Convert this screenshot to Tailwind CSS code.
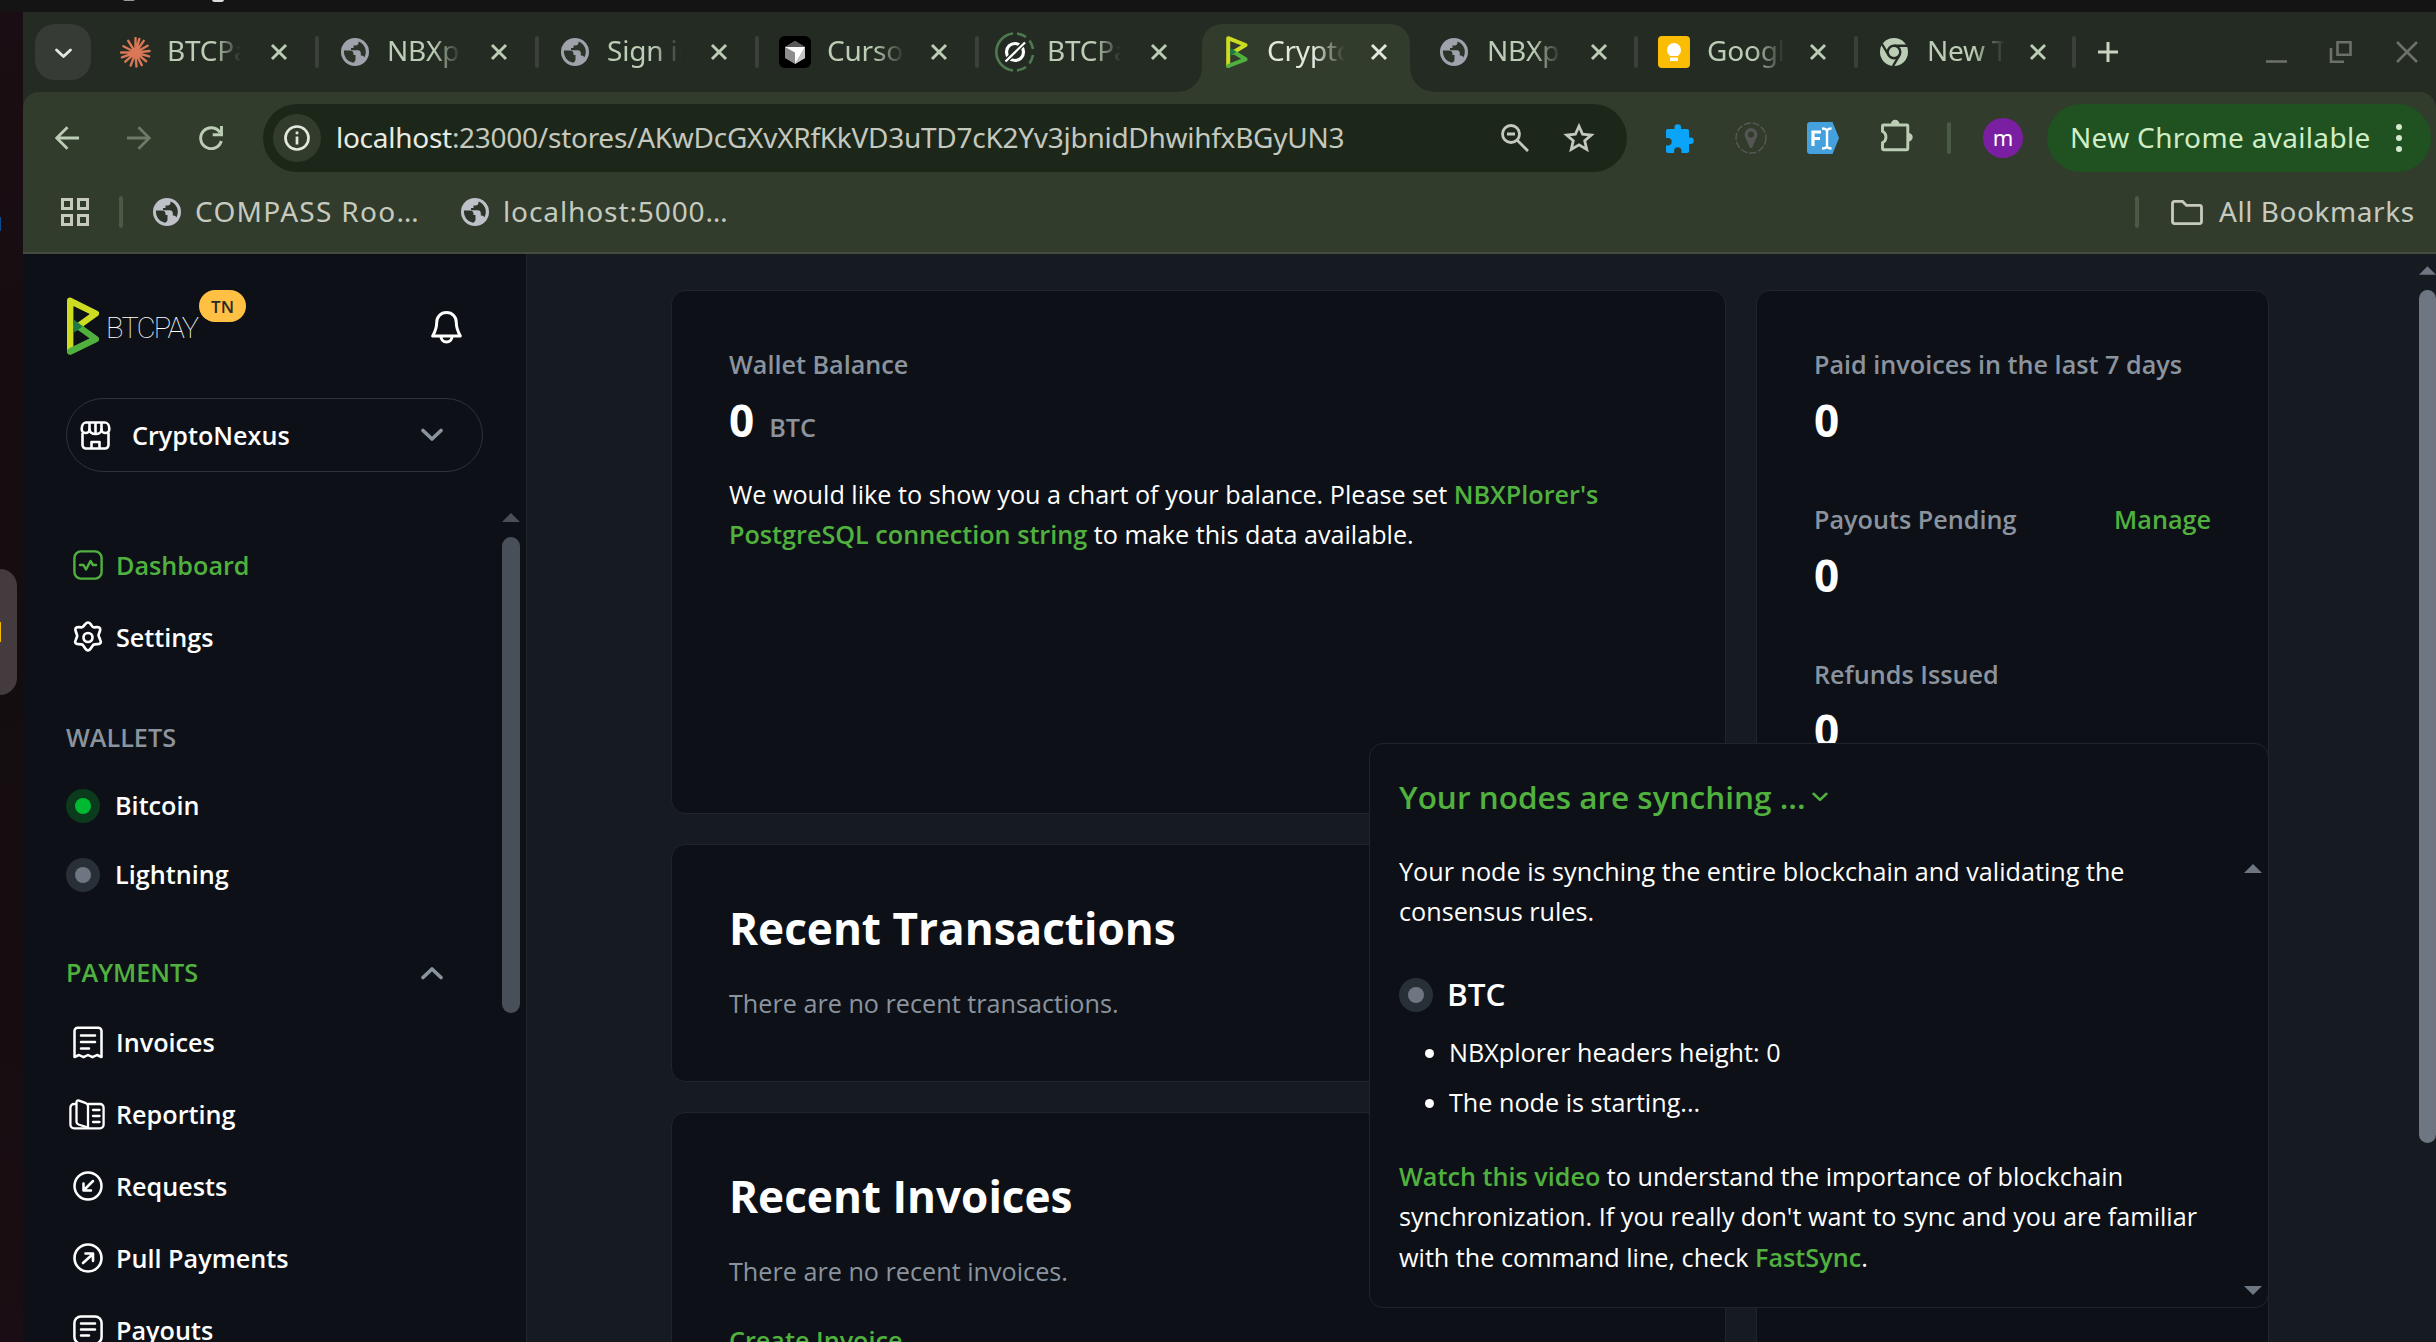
<!DOCTYPE html>
<html lang="en">
<head>
<meta charset="utf-8">
<title>CryptoNexus</title>
<script src="https://cdn.jsdelivr.net/npm/@tailwindcss/browser@4"></script>
</head>
<body class="relative w-[2436px] h-[1342px] overflow-hidden bg-[#141414] font-['Open_Sans',sans-serif] text-[25.2px] leading-[40.3px] text-white">
<svg class="hidden">
  <symbol id="globe" viewBox="0 0 28 28"><circle cx="14" cy="14" r="14" fill="currentColor"/><path d="M3 12.500h5.500c2.500 0 4 1 4 3v1.500h2v4.500c0 1.500-1 3-2.600 3.300A11.200 11.200 0 0 1 3 12.500zM17.500 3.400v1.400c0 1.600-1.200 2.800-2.800 2.800h-2.200v2.400h-2.500v2.200h7c1.600 0 2.800 1.200 2.800 2.800v2.600h1c1.200 0 2.100.9 2.500 1.900A11.200 11.200 0 0 0 17.500 3.400z" fill="#2b3429"/></symbol>
  <symbol id="x" viewBox="0 0 18 18"><path d="M2 2l14 14M16 2L2 16" stroke="currentColor" stroke-width="2.900" fill="none"/></symbol>
  <symbol id="btcpay" viewBox="0 0 32 58"><path d="M3.200 54V3.800L28.800 16.500 10 30" fill="none" stroke="#cedc21" stroke-width="6.400" stroke-linejoin="round" stroke-linecap="round"/><path d="M3.200 54.500L28.800 42 10 28.500" fill="none" stroke="#51b13e" stroke-width="6.400" stroke-linejoin="round" stroke-linecap="round"/><path d="M6.400 22v14l9-6.500z" fill="#1e7a44"/></symbol>
  <symbol id="chev" viewBox="0 0 22 14"><path d="M2 2.500l9 8.500 9-8.500" fill="none" stroke="currentColor" stroke-width="3.600" stroke-linecap="round" stroke-linejoin="round"/></symbol>
</svg>

<!-- Desktop panel edge -->
<div class="h-3 bg-[#141414] relative overflow-hidden">
  <div class="absolute left-[123px] -top-[3px] w-3 h-1 rounded-full bg-[#999]"></div>
  <div class="absolute left-[212px] -top-[3px] w-3 h-[5px] rounded-full bg-[#ddd]"></div>
</div>

<div class="flex h-[1330px]">
  <!-- Dock -->
  <div class="relative w-[23px] shrink-0 bg-linear-to-b from-[#1a0d13] via-[#140d0f] to-[#1a0d13] overflow-hidden">
    <div class="absolute left-0 top-[557px] w-[17px] h-[126px] rounded-r-[18px] bg-[#443b3f]"></div>
    <div class="absolute left-0 top-[610px] w-px h-5 bg-[#f5b800]"></div>
    <div class="absolute left-0 top-[205px] w-px h-3.5 bg-[#0c4a8c]"></div>
  </div>

  <!-- Browser -->
  <div class="flex flex-col w-[2413px] bg-[#242b23]">
    <!-- Tab strip -->
    <div class="h-20 flex items-start pt-3 pl-3 font-['Noto_Sans',sans-serif] text-[28px] tracking-[-0.2px] text-[#bccdb5] leading-none">
      <div class="w-14 h-14 rounded-[20px] bg-[#373b36] flex items-center justify-center text-[#e3e8df]"><svg class="w-[17px] h-[11px] mt-0.5"><use href="#chev"/></svg></div>

      <div class="ml-[29px] w-[197px] h-14 flex items-center">
        <svg class="w-[31px] h-[31px] shrink-0" viewBox="-16 -16 32 32"><g stroke="#d97757" stroke-width="2.500" stroke-linecap="round"><path d="M0 0V-15M0 0L4-14M0 0L8.500-12M0 0L12.500-7M0 0L14.500-1.500M0 0L14 4M0 0L11 9M0 0L6.500 13M0 0L1 14.500M0 0L-5 13.500M0 0L-10.500 9.500M0 0L-14 5M0 0L-15 0M0 0L-12.500-6.500M0 0L-7.500-12"/></g></svg>
        <div class="ml-4 mr-px w-[78px] h-10 leading-[37px] overflow-hidden whitespace-nowrap mask-r-from-60% mask-r-to-95%">BTCPay</div>
        <svg class="ml-[24px] w-[18px] h-[18px] shrink-0"><use href="#x"/></svg>
      </div>
      <div class="w-1 h-8 mt-3 -ml-0.5 rounded-full bg-[#3b413a] shrink-0"></div>
      <div class="w-[216px] h-14 flex items-center pl-[22px]">
        <svg class="w-7 h-7 shrink-0 text-[#9fa2ab]"><use href="#globe"/></svg>
        <div class="ml-[18px] w-[78px] h-10 leading-[37px] overflow-hidden whitespace-nowrap mask-r-from-60% mask-r-to-95%">NBXplorer</div>
        <svg class="ml-[25px] w-[18px] h-[18px] shrink-0"><use href="#x"/></svg>
      </div>
      <div class="w-1 h-8 mt-3 rounded-full bg-[#3b413a] shrink-0"></div>
      <div class="w-[216px] h-14 flex items-center pl-[22px]">
        <svg class="w-7 h-7 shrink-0 text-[#9fa2ab]"><use href="#globe"/></svg>
        <div class="ml-[18px] w-[78px] h-10 leading-[37px] overflow-hidden whitespace-nowrap mask-r-from-60% mask-r-to-95%">Sign in</div>
        <svg class="ml-[25px] w-[18px] h-[18px] shrink-0"><use href="#x"/></svg>
      </div>
      <div class="w-1 h-8 mt-3 rounded-full bg-[#3b413a] shrink-0"></div>
      <div class="w-[216px] h-14 flex items-center pl-5">
        <svg class="w-8 h-8 shrink-0" viewBox="0 0 32 32"><rect width="32" height="32" rx="6" fill="#000"/><path d="M16 5l10 6v11l-10 6-10-6V11z" fill="#8d8d8d"/><path d="M6 11l10-6 10 6z" fill="#5a5a5a"/><path d="M6 11h20L16 28V16.500z" fill="#fff"/><path d="M26 11v11l-10 6z" fill="#c4c4c4"/></svg>
        <div class="ml-4 w-[78px] h-10 leading-[37px] overflow-hidden whitespace-nowrap mask-r-from-60% mask-r-to-100%">Cursor</div>
        <svg class="ml-[25px] w-[18px] h-[18px] shrink-0"><use href="#x"/></svg>
      </div>
      <div class="w-1 h-8 mt-3 rounded-full bg-[#3b413a] shrink-0"></div>
      <div class="w-[225px] h-14 flex items-center pl-4">
        <svg class="w-10 h-10 shrink-0" viewBox="-20 -20 40 40" fill="none"><path d="M-2-18.500A18.600 18.600 0 0 0-2 18.500M2-18.500Q7-17.800 11-15M14.500-11.500Q17-8 18-3M18 3Q17 8 14.500 11.500M11 15Q7 17.800 2 18.500" stroke="#4f7a50" stroke-width="2.600"/><circle r="8.500" stroke="#fff" stroke-width="3.200"/><path d="M-10 10L10-10" stroke="#242b23" stroke-width="5"/><path d="M-9.500 9.500L10-9.500" stroke="#fff" stroke-width="2.300"/></svg>
        <div class="ml-3 w-[78px] h-10 leading-[37px] overflow-hidden whitespace-nowrap mask-r-from-60% mask-r-to-95%">BTCPay</div>
        <svg class="ml-[25px] w-[18px] h-[18px] shrink-0"><use href="#x"/></svg>
      </div>
      <!-- Active tab -->
      <div class="relative w-[208px] h-[68px] pb-3 flex items-center pl-6 bg-[#313c2d] rounded-t-[20px] text-[#e3e8df] -ml-0.5">
        <div class="absolute -left-6 bottom-0 size-6 bg-[radial-gradient(circle_at_0_0,transparent_23.5px,#313c2d_24px)]"></div>
        <div class="absolute -right-6 bottom-0 size-6 bg-[radial-gradient(circle_at_100%_0,transparent_23.5px,#313c2d_24px)]"></div>
        <svg class="w-[22px] h-8 shrink-0" viewBox="0 0 22 32" fill="none" stroke-width="4" stroke-linejoin="round" stroke-linecap="round"><path d="M2.200 30V2.200L19.500 9 7 16.500" stroke="#cedc21"/><path d="M2.200 30L19.500 23.300 7 15.500" stroke="#51b13e"/><path d="M4.200 12v8l6-4z" fill="#1e7a44"/></svg>
        <div class="ml-[19px] w-[78px] h-10 leading-[37px] overflow-hidden whitespace-nowrap mask-r-from-60% mask-r-to-100%">CryptoNexus</div>
        <svg class="ml-[25px] w-[18px] h-[18px] shrink-0"><use href="#x"/></svg>
      </div>
      <div class="w-[224px] h-14 flex items-center pl-[30px]">
        <svg class="w-7 h-7 shrink-0 text-[#9fa2ab]"><use href="#globe"/></svg>
        <div class="ml-[19px] w-[78px] h-10 leading-[37px] overflow-hidden whitespace-nowrap mask-r-from-60% mask-r-to-95%">NBXplorer</div>
        <svg class="ml-[25px] w-[18px] h-[18px] shrink-0"><use href="#x"/></svg>
      </div>
      <div class="w-1 h-8 mt-3 rounded-full bg-[#3b413a] shrink-0"></div>
      <div class="w-[216px] h-14 flex items-center pl-5">
        <svg class="w-8 h-8 shrink-0" viewBox="0 0 32 32"><rect width="32" height="32" rx="4" fill="#fbbc04"/><path d="M16 7a7 7 0 0 0-7 7c0 3 1.500 4 3 6h8c1.500-2 3-3 3-6a7 7 0 0 0-7-7zM12 21.500h8V25h-8z" fill="#fff"/></svg>
        <div class="ml-[17px] w-[78px] h-10 leading-[37px] overflow-hidden whitespace-nowrap mask-r-from-60% mask-r-to-100%">Google</div>
        <svg class="ml-[24px] w-[18px] h-[18px] shrink-0"><use href="#x"/></svg>
      </div>
      <div class="w-1 h-8 mt-3 rounded-full bg-[#3b413a] shrink-0"></div>
      <div class="w-[214px] h-14 flex items-center pl-[22px]">
        <svg class="w-7 h-7 shrink-0" viewBox="0 0 28 28"><circle cx="14" cy="14" r="14" fill="#bccdb5"/><circle cx="14" cy="14" r="6.300" fill="none" stroke="#242b23" stroke-width="2.400"/><path d="M14 7.700h13M8.500 17L2 6M19.500 17.200L13 28" stroke="#242b23" stroke-width="2.400"/></svg>
        <div class="ml-[19px] w-[78px] h-10 leading-[37px] overflow-hidden whitespace-nowrap mask-r-from-60% mask-r-to-100%">New Tab</div>
        <svg class="ml-[24px] w-[18px] h-[18px] shrink-0"><use href="#x"/></svg>
      </div>
      <div class="w-1 h-8 mt-3 rounded-full bg-[#3b413a] shrink-0"></div>
      <svg class="ml-[22px] mt-[18px] w-5 h-5 shrink-0" viewBox="0 0 20 20"><path d="M10 0v20M0 10h20" stroke="#c8d3c2" stroke-width="3"/></svg>
      <svg class="ml-[148px] mt-[16px] w-[152px] h-6 shrink-0" viewBox="0 0 152 24" fill="none" stroke="#6b7169" stroke-width="2.600"><path d="M0 21.500h21"/><path d="M71.500 2.300h13v12.500h-13zM65 8v13.700h13"/><path d="M131 2l20 20M151 2l-20 20"/></svg>
    </div>

    <!-- Toolbar -->
    <div class="h-[162px] bg-[#313c2d] border-b-2 border-[#434c41] rounded-t-[16px] font-['Noto_Sans',sans-serif] leading-none text-[#c7cabf]">
      <div class="flex items-center h-[92px] pl-8">
        <svg class="w-6 h-6" viewBox="0 0 24 24" fill="none" stroke="#bccdb5" stroke-width="2.800"><path d="M24 12H2M12.500 1.200L1.700 12l10.800 10.800"/></svg>
        <svg class="ml-12 w-6 h-6" viewBox="0 0 24 24" fill="none" stroke="#6c7a67" stroke-width="2.800"><path d="M0 12h22M11.500 1.200L22.300 12 11.500 22.800"/></svg>
        <svg class="ml-12 w-6 h-6" viewBox="0 0 24 24" fill="none" stroke="#bccdb5" stroke-width="2.900"><path d="M22.300 15A10.500 10.500 0 1 1 21 6.500M22.500 0v8.700h-8.800"/></svg>
        <div class="ml-[40px] w-[1364px] h-[68px] rounded-full bg-[#1c271a] flex items-center pl-2.5">
          <div class="w-12 h-12 rounded-full bg-[#313c2d] flex items-center justify-center"><svg class="w-[26px] h-[26px]" viewBox="0 0 26 26" fill="none" stroke="#e3e8df" stroke-width="2.700"><circle cx="13" cy="13" r="11.500"/><path d="M13 11.500v8M13 6.500v2.800"/></svg></div>
          <div class="ml-[15px] pb-0.5 w-[1165px] text-[28px] tracking-[-0.27px] whitespace-nowrap text-[#c4c8bf]"><span class="text-[#e8ebe4]">localhost</span>:23000/stores/AKwDcGXvXRfKkVD3uTD7cK2Yv3jbnidDhwihfxBGyUN3</div>
          <svg class="w-7 h-7" viewBox="0 0 28 28" fill="none" stroke="#c4c8bf" stroke-width="2.800"><circle cx="10" cy="10" r="8.500"/><path d="M16.500 16.500L27 27M6 10h8"/></svg>
          <svg class="ml-[34px] w-8 h-8" viewBox="0 0 24 24" fill="none" stroke="#c4c8bf" stroke-width="2.100"><path d="M12 3.200l2.700 6 6.500.6-4.900 4.300 1.500 6.400-5.800-3.400-5.800 3.400 1.500-6.400L2.800 9.800l6.500-.6z"/></svg>
        </div>
        <svg class="ml-[39px] w-7 h-[29px]" viewBox="0 0 28 29" fill="#0aa5fb"><path d="M2 5h6.500V3.500a3 3 0 0 1 6.500 0V5h6a2 2 0 0 1 2 2v6.500h1.500a3.200 3.200 0 0 1 0 6.500H23v7a2 2 0 0 1-2 2h-5.500v-2a3.700 3.700 0 0 0-7.400 0v2H2a2 2 0 0 1-2-2v-5.500h2a3.700 3.700 0 0 0 0-7.400H0V7a2 2 0 0 1 2-2z"/></svg>
        <svg class="ml-[41px] w-8 h-8" viewBox="0 0 32 32" fill="none" stroke="#5a5c5a"><circle cx="16" cy="16" r="15" stroke-width="1.300" stroke-dasharray="7 2"/><path d="M16 6a6.500 6.500 0 0 0-6 8.500L15 26h2l5-11.500A6.500 6.500 0 0 0 16 6z" fill="#535653" stroke="none"/><circle cx="16" cy="12.500" r="3" fill="#313c2d" stroke="none"/></svg>
        <svg class="ml-10 w-8 h-8" viewBox="0 0 32 32"><path d="M3 0h22.500l6.500 16-6.500 16H3a3 3 0 0 1-3-3V3a3 3 0 0 1 3-3z" fill="#44a1de"/><path d="M6 24V10h8M6 16.500h7" fill="none" stroke="#fff" stroke-width="3.200"/><path d="M20 8v17M15 6.500q4 0 5 2 1-2 4.500-2M15 26.500q4 0 5-2 1 2 4.500 2" fill="none" stroke="#fff" stroke-width="2.400"/></svg>
        <svg class="ml-[42px] mb-1.5 w-8 h-[33px]" viewBox="0 0 32 33"><path d="M2.500 6h23.500q.8 0 .8.800v23q0 1-.8 1H2.500q-1 0-1-1v-6a6.500 6.500 0 0 0 0-11.500V7q0-1 1-1z" fill="none" stroke="#bccdb5" stroke-width="2.900"/><path d="M10 5a4.200 4.200 0 0 1 8.400 0zM27.500 14a4.200 4.200 0 0 1 0 8.400z" fill="#bccdb5"/></svg>
        <div class="ml-[34px] w-1 h-8 rounded-full bg-[#4b5a47]"></div>
        <div class="ml-8 w-10 h-10 rounded-full bg-[#7b1fa2] flex items-center justify-center text-white text-[22px] pb-0.5">m</div>
        <div class="ml-6 w-[384px] h-[68px] rounded-full bg-[#1f5220] flex items-center pl-[23px] text-[#d0edc6] text-[28px]">
          <div class="w-[328px] pb-0.5 tracking-[0.33px] whitespace-nowrap">New Chrome available</div>
          <svg class="-ml-0.5 w-[6px] h-[28px]" viewBox="0 0 6 28" fill="#d6e8cf"><circle cx="3" cy="3" r="3"/><circle cx="3" cy="14" r="3"/><circle cx="3" cy="25" r="3"/></svg>
        </div>
      </div>
      <div class="flex items-center h-14 pl-[38px] text-[28px]">
        <svg class="w-7 h-7" viewBox="0 0 28 28" fill="none" stroke="#c7cabf" stroke-width="3"><path d="M1.500 1.500h9v9h-9zM17.500 1.500h9v9h-9zM1.500 17.500h9v9h-9zM17.500 17.500h9v9h-9z"/></svg>
        <div class="ml-[30px] w-1 h-8 rounded-full bg-[#4b5a47]"></div>
        <svg class="ml-[30px] w-7 h-7 text-[#bfc1c8]"><use href="#globe"/></svg>
        <div class="ml-[14px] pb-0.5 w-[266px] tracking-[1.3px] whitespace-nowrap">COMPASS Roo…</div>
        <svg class="w-7 h-7 text-[#bfc1c8]"><use href="#globe"/></svg>
        <div class="ml-[14px] pb-0.5 w-[1632px] tracking-[0.9px] whitespace-nowrap">localhost:5000…</div>
        <div class="w-1 h-8 rounded-full bg-[#4b5a47]"></div>
        <svg class="ml-8 w-8 h-[25px]" viewBox="0 0 32 25" fill="none" stroke="#c7cabf" stroke-width="2.800"><path d="M3.500 1.400h8l4 4h13q2 0 2 2v14.200q0 2-2 2h-25q-2 0-2-2V3.400q0-2 2-2z"/></svg>
        <div class="ml-4 pb-0.5 tracking-[0.55px] whitespace-nowrap">All Bookmarks</div>
      </div>
    </div>

    <!-- Page -->
    <div class="relative flex h-[1088px] bg-[#161b22] overflow-hidden">
      <aside class="relative w-[504px] shrink-0 bg-[#0d1117] border-r border-[#20252c] font-semibold">
        <div class="flex items-start h-[144px] pt-[43px] pl-11">
          <svg class="w-8 h-[58px]"><use href="#btcpay"/></svg>
          <span class="ml-[7px] mt-[13px] w-[93px] font-['Roboto'] font-thin text-[29px] leading-[36px] tracking-[-1.7px]">BTCPAY</span>
          <span class="-mt-[7px] w-[47px] h-8 rounded-full bg-[#ffc043] text-[#292929] text-[17px] leading-[33px] text-center">TN</span>
          <svg class="ml-[185px] mt-3.5 w-[31px] h-[33px]" viewBox="0 0 31 33" fill="none" stroke="#fff" stroke-width="3" stroke-linejoin="round"><path d="M15.500 1.600c-6 0-9.800 4.500-9.800 9.800 0 6-1.500 9-4 13.600h27.600c-2.500-4.600-4-7.600-4-13.600 0-5.300-3.800-9.800-9.800-9.800z"/><path d="M10 25.500a5.500 5.500 0 0 0 11 0"/></svg>
        </div>
        <div class="ml-[43px] w-[417px] h-[74px] rounded-full border border-[#2d333b] flex items-center pl-[13px]">
          <svg class="w-[31px] h-[29px]" viewBox="0 0 31 29" fill="none" stroke="#fff" stroke-width="2.600" stroke-linejoin="round"><path d="M6 1.500h19c2.500 0 4.300 3 4.300 6.500 0 2.500-1.500 4-3.800 4-2.200 0-4-1.500-4-3.500 0 2.500-2.500 4.500-6 4.500s-6-2-6-4.500c0 2-1.800 3.500-4 3.500-2.300 0-3.800-1.500-3.800-4C1.700 4.500 3.500 1.500 6 1.500z"/><path d="M9.500 2v7M15.500 2v10M21.500 2v7M2.500 12v12a3.500 3.500 0 0 0 3.500 3.500h19a3.500 3.500 0 0 0 3.500-3.500V12M11.500 27v-6h8v6"/></svg>
          <span class="ml-[21px] w-[289px]">CryptoNexus</span>
          <svg class="w-[22px] h-[14px] text-[#8b949e]"><use href="#chev"/></svg>
        </div>

        <nav class="pl-[43px] pt-[57px]">
          <div class="flex items-center h-[72px] text-[#51b13e]">
            <svg class="ml-[6.500px] w-[30px] h-[30px]" viewBox="0 0 30 30" fill="none" stroke="currentColor" stroke-width="2.400" stroke-linecap="round" stroke-linejoin="round"><rect x="1.400" y="1.400" width="27.200" height="27.200" rx="6.500"/><path d="M7 15h3.500l2.500 4.500L17.500 11l2.500 4h3"/></svg>
            <span class="ml-[13.500px]">Dashboard</span>
          </div>
          <div class="flex items-center h-[72px]">
            <svg class="ml-[6.500px] w-[30px] h-[33px]" viewBox="0 0 30 33" fill="none" stroke="currentColor" stroke-width="2.700" stroke-linejoin="round"><path d="M12.300 3.200q2.700-3.400 5.400 0l1.700 2.300q.8 1 2 .9l2.700-.3q4.300-.2 2.700 4.500l-1 2.500q-.6 1.200 0 2.400l.5 1q0 0 0 0l.8 2q2.200 4.400-2.600 4.700l-2.900.2q-1.300.1-2 1.300l-1.900 2.900q-2.700 3.400-5.400 0l-1.900-2.900q-.7-1.200-2-1.300l-2.900-.2q-4.800-.3-2.600-4.700l1-2.400q.6-1.300 0-2.600l-1.100-2.900q-1.600-4.700 2.700-4.500l2.700.3q1.300.1 2-.9z"/><circle cx="15" cy="16.500" r="4.500"/></svg>
            <span class="ml-[13.500px]">Settings</span>
          </div>
          <div class="flex items-center h-[63px] mt-[33px] text-[#8b949e]">WALLETS</div>
          <div class="flex items-center h-[69px] mt-0.5">
            <span class="w-[34px] h-[34px] rounded-full bg-[#0b3a1c] flex items-center justify-center"><span class="w-4 h-4 rounded-full bg-[#00b933]"></span></span>
            <span class="ml-[15px]">Bitcoin</span>
          </div>
          <div class="flex items-center h-[69px]">
            <span class="w-[34px] h-[34px] rounded-full bg-[#292f37] flex items-center justify-center"><span class="w-4 h-4 rounded-full bg-[#6e7681]"></span></span>
            <span class="ml-[15px]">Lightning</span>
          </div>
          <div class="flex items-center h-[63px] mt-8 text-[#51b13e]">
            <span class="w-[355px]">PAYMENTS</span>
            <svg class="w-[22px] h-[14px] text-[#8b949e] rotate-180"><use href="#chev"/></svg>
          </div>
          <div class="flex items-center h-[72px] mt-0.5">
            <svg class="ml-[6.500px] w-[30px] h-[33px]" viewBox="0 0 30 33" fill="none" stroke="currentColor" stroke-width="2.500" stroke-linecap="round" stroke-linejoin="round"><path d="M1.500 31V5a3.300 3.300 0 0 1 3.300-3.300h20.400A3.300 3.300 0 0 1 28.500 5v26l-4.500-2-4.500 2.200-4.500-2.200-4.500 2.200L6 29z"/><path d="M8 9.500h14M8 16h14M8 22.500h8"/></svg>
            <span class="ml-[13.500px]">Invoices</span>
          </div>
          <div class="flex items-center h-[72px]">
            <svg class="ml-[3px] w-[36px] h-[31px]" viewBox="0 0 36 31" fill="none" stroke="currentColor" stroke-width="2.300" stroke-linecap="round" stroke-linejoin="round"><path d="M7 5H5a3.600 3.600 0 0 0-3.600 3.600v17A3.600 3.600 0 0 0 5 29.300h26a3.600 3.600 0 0 0 3.600-3.600v-17A3.600 3.600 0 0 0 31 5H19"/><path d="M7.500 3.500c0-2 1-2.300 2.500-1.900l7 2.600c1.500.6 2 1.500 2 3v21.500L9.500 25.500c-1.500-.5-2-1-2-2.500zM24 11h6.500M24 17h6.500M24 23h6.500"/></svg>
            <span class="ml-[11px]">Reporting</span>
          </div>
          <div class="flex items-center h-[72px]">
            <svg class="ml-[6.500px] w-[30px] h-[30px]" viewBox="0 0 30 30" fill="none" stroke="currentColor" stroke-width="2.500" stroke-linecap="round" stroke-linejoin="round"><circle cx="15" cy="15" r="13.500"/><path d="M20 10l-9.500 9.500M10.500 12.500v7h7.500"/></svg>
            <span class="ml-[13.500px]">Requests</span>
          </div>
          <div class="flex items-center h-[72px]">
            <svg class="ml-[6.500px] w-[30px] h-[30px]" viewBox="0 0 30 30" fill="none" stroke="currentColor" stroke-width="2.600" stroke-linecap="round" stroke-linejoin="round"><circle cx="15" cy="15" r="13.500"/><path d="M10 20l10-9M12.500 10.500H20V18"/></svg>
            <span class="ml-[13.500px]">Pull Payments</span>
          </div>
          <div class="flex items-center h-[72px]">
            <svg class="ml-[6.500px] w-[30px] h-[30px]" viewBox="0 0 30 30" fill="none" stroke="currentColor" stroke-width="2.500" stroke-linecap="round" stroke-linejoin="round"><rect x="1.400" y="1.400" width="27.200" height="27.200" rx="6.500"/><path d="M8 8.500h14M8 14.500h14M8 20.500h8"/></svg>
            <span class="ml-[13.500px]">Payouts</span>
          </div>
        </nav>
        <!-- Sidebar scrollbar -->
        <div class="absolute left-[479px] top-[259px] w-[18px]">
          <svg class="w-[18px] h-[9px] block" viewBox="0 0 18 9"><path d="M9 0l9 9H0z" fill="#484f58"/></svg>
          <div class="mt-[15px] h-[476px] rounded-full bg-[#484f58]"></div>
        </div>
      </aside>

      <main class="pl-[144px] pt-[36px] flex flex-col gap-[30px]">
        <div class="flex gap-[30px] h-[524px]">
          <section class="w-[1055px] h-[524px] shrink-0 rounded-[14px] border border-[#20252c] bg-[#0d1117] px-[57px] pt-[58px]">
            <h6 class="leading-[30px] font-semibold text-[#8b949e]">Wallet Balance</h6>
            <div class="mt-3.5 h-[54px] flex items-baseline leading-[54px]"><span class="text-[44.100px] font-bold">0</span><span class="ml-[15px] font-semibold text-[#8b949e]">BTC</span></div>
            <p class="mt-[27px]">We would like to show you a chart of your balance. Please set <a class="font-semibold text-[#51b13e]">NBXPlorer's PostgreSQL connection string</a> to make this data available.</p>
          </section>
          <section class="w-[513px] h-[1100px] shrink-0 rounded-[14px] border border-[#20252c] bg-[#0d1117] px-[57px] pt-[58px] flex flex-col gap-[57px]">
            <div><h6 class="leading-[30px] font-semibold text-[#8b949e]">Paid invoices in the last 7 days</h6><div class="mt-3.5 text-[44.100px] font-bold leading-[54px]">0</div></div>
            <div><div class="flex justify-between leading-[30px] font-semibold text-[#8b949e]">Payouts Pending<a class="text-[#51b13e]">Manage</a></div><div class="mt-3.5 text-[44.100px] font-bold leading-[54px]">0</div></div>
            <div><h6 class="leading-[30px] font-semibold text-[#8b949e]">Refunds Issued</h6><div class="mt-3.5 text-[44.100px] font-bold leading-[54px]">0</div></div>
          </section>
        </div>
        <section class="w-[1055px] h-[238px] shrink-0 rounded-[14px] border border-[#20252c] bg-[#0d1117] px-[57px] pt-[53px]">
          <h3 class="text-[44.100px] font-bold leading-[60px]">Recent Transactions</h3>
          <p class="mt-[25px] text-[#8b949e]">There are no recent transactions.</p>
        </section>
        <section class="w-[1055px] h-[400px] shrink-0 rounded-[14px] border border-[#20252c] bg-[#0d1117] px-[57px] pt-[53px]">
          <h3 class="text-[44.100px] font-bold leading-[60px]">Recent Invoices</h3>
          <p class="mt-[25px] text-[#8b949e]">There are no recent invoices.</p>
          <a class="block mt-[29px] font-semibold text-[#51b13e]">Create Invoice</a>
        </section>
      </main>

      <!-- Sync status popup -->
      <div class="absolute left-[1346px] top-[489px] w-[900px] h-[565px] rounded-[14px] border border-[#20252c] bg-[#0d1117] pl-[29px] pt-[32px]">
        <div class="flex items-center h-[42px] text-[31.500px] font-semibold text-[#51b13e]">Your nodes are synching ...<svg class="ml-[6px] w-4 h-[10px]"><use href="#chev"/></svg></div>
        <p class="mt-[33px] w-[820px]">Your node is synching the entire blockchain and validating the consensus rules.</p>
        <div class="mt-[42px] h-[42px] flex items-center text-[31.500px] font-semibold">
          <span class="w-[34px] h-[34px] rounded-full bg-[#292f37] flex items-center justify-center"><span class="w-4 h-4 rounded-full bg-[#6e7681]"></span></span>
          <span class="ml-[14px]">BTC</span>
        </div>
        <ul class="mt-[17px] flex flex-col gap-2.5">
          <li class="flex items-center h-10"><span class="ml-[26px] mr-[15px] mt-0.5 w-[9px] h-[9px] rounded-full bg-white"></span>NBXplorer headers height: 0</li>
          <li class="flex items-center h-10"><span class="ml-[26px] mr-[15px] mt-0.5 w-[9px] h-[9px] rounded-full bg-white"></span>The node is starting...</li>
        </ul>
        <p class="mt-[33px] w-[820px] leading-[40.700px]"><a class="font-semibold text-[#51b13e]">Watch this video</a> to understand the importance of blockchain synchronization. If you really don't want to sync and you are familiar with the command line, check <a class="font-semibold text-[#51b13e]">FastSync</a>.</p>
        <svg class="absolute right-[6px] top-[120px] w-[18px] h-[9px]" viewBox="0 0 18 9"><path d="M9 0l9 9H0z" fill="#6e7681"/></svg>
        <svg class="absolute right-[6px] top-[542px] w-[18px] h-[9px]" viewBox="0 0 18 9"><path d="M9 9l9-9H0z" fill="#6e7681"/></svg>
      </div>

      <!-- Page scrollbar -->
      <div class="absolute right-0 top-[12px] w-[17px]">
        <svg class="w-[17px] h-[9px] block" viewBox="0 0 18 9"><path d="M9 0l9 9H0z" fill="#6e7681"/></svg>
        <div class="mt-[15px] h-[853px] rounded-full bg-[#6e7681]"></div>
      </div>
    </div>
  </div>
</div>
</body>
</html>
